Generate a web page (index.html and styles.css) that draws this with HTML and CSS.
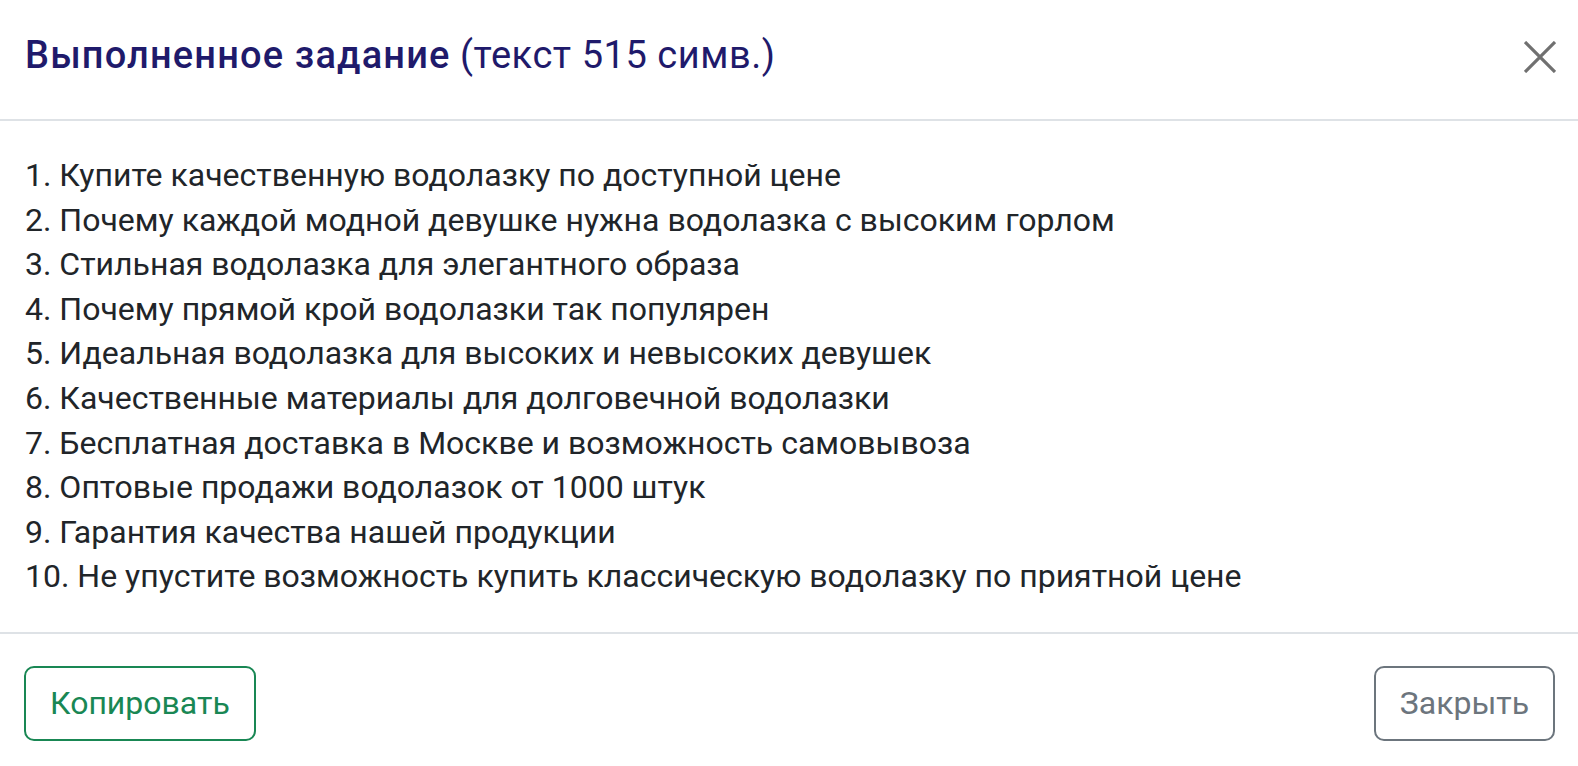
FILE: index.html
```html
<!DOCTYPE html>
<html lang="ru">
<head>
    <meta charset="UTF-8">
    <title>Выполненное задание</title>
    <link rel="stylesheet" href="styles.css">
</head>
<body>
    <div class="modal">
        <div class="modal-header">
            <h2 class="modal-title"><span class="title-main">Выполненное задание</span> <span class="title-note">(текст 515 симв.)</span></h2>
            <button class="btn-close" aria-label="Закрыть">
                <svg width="32" height="32" viewBox="0 0 32 32">
                    <path d="M1 1 L31 31 M31 1 L1 31" stroke="#707070" stroke-width="3.2" fill="none"/>
                </svg>
            </button>
        </div>
        <div class="modal-body">
            <div>1. Купите качественную водолазку по доступной цене</div>
            <div>2. Почему каждой модной девушке нужна водолазка с высоким горлом</div>
            <div>3. Стильная водолазка для элегантного образа</div>
            <div>4. Почему прямой крой водолазки так популярен</div>
            <div>5. Идеальная водолазка для высоких и невысоких девушек</div>
            <div>6. Качественные материалы для долговечной водолазки</div>
            <div>7. Бесплатная доставка в Москве и возможность самовывоза</div>
            <div>8. Оптовые продажи водолазок от 1000 штук</div>
            <div>9. Гарантия качества нашей продукции</div>
            <div>10. Не упустите возможность купить классическую водолазку по приятной цене</div>
        </div>
        <div class="modal-footer">
            <button class="btn btn-copy">Копировать</button>
            <button class="btn btn-close-text">Закрыть</button>
        </div>
    </div>
</body>
</html>
```

FILE: styles.css
```css
body {
    margin: 0;
    font-family: Roboto, "Liberation Sans", Arial, sans-serif;
    background: #ffffff;
    color: #212529;
}
.modal {
    background: #ffffff;
    min-height: 100vh;
}
.modal-header {
    display: flex;
    align-items: flex-start;
    justify-content: space-between;
    height: 121px;
    padding: 33px 22px 0 25px;
    border-bottom: 2px solid #dee2e6;
    box-sizing: border-box;
}
.modal-title {
    margin: 0;
    font-size: 38px;
    font-weight: 500;
    color: #1f1a6b;
    line-height: 1.2;
}
.title-main {
    letter-spacing: 1.15px;
}
.title-note {
    font-weight: 400;
    letter-spacing: 0.55px;
}
.btn-close {
    background: none;
    border: none;
    padding: 0;
    margin-top: 8px;
    width: 32px;
    height: 32px;
    cursor: pointer;
}
.btn-close svg {
    display: block;
}
.modal-body {
    padding: 32px 23px 33px 25px;
    font-size: 32px;
    line-height: 44.6px;
    border-bottom: 2px solid #dee2e6;
}
.modal-footer {
    display: flex;
    justify-content: space-between;
    padding: 32px 23px 0 24px;
}
.btn {
    height: 75px;
    padding: 0 24px;
    font-family: inherit;
    font-size: 32px;
    background: #ffffff;
    border-radius: 10px;
    border: 2px solid;
    cursor: pointer;
}
.btn-copy {
    color: #198754;
    border-color: #198754;
}
.btn-close-text {
    color: #6c757d;
    border-color: #6c757d;
}
```
